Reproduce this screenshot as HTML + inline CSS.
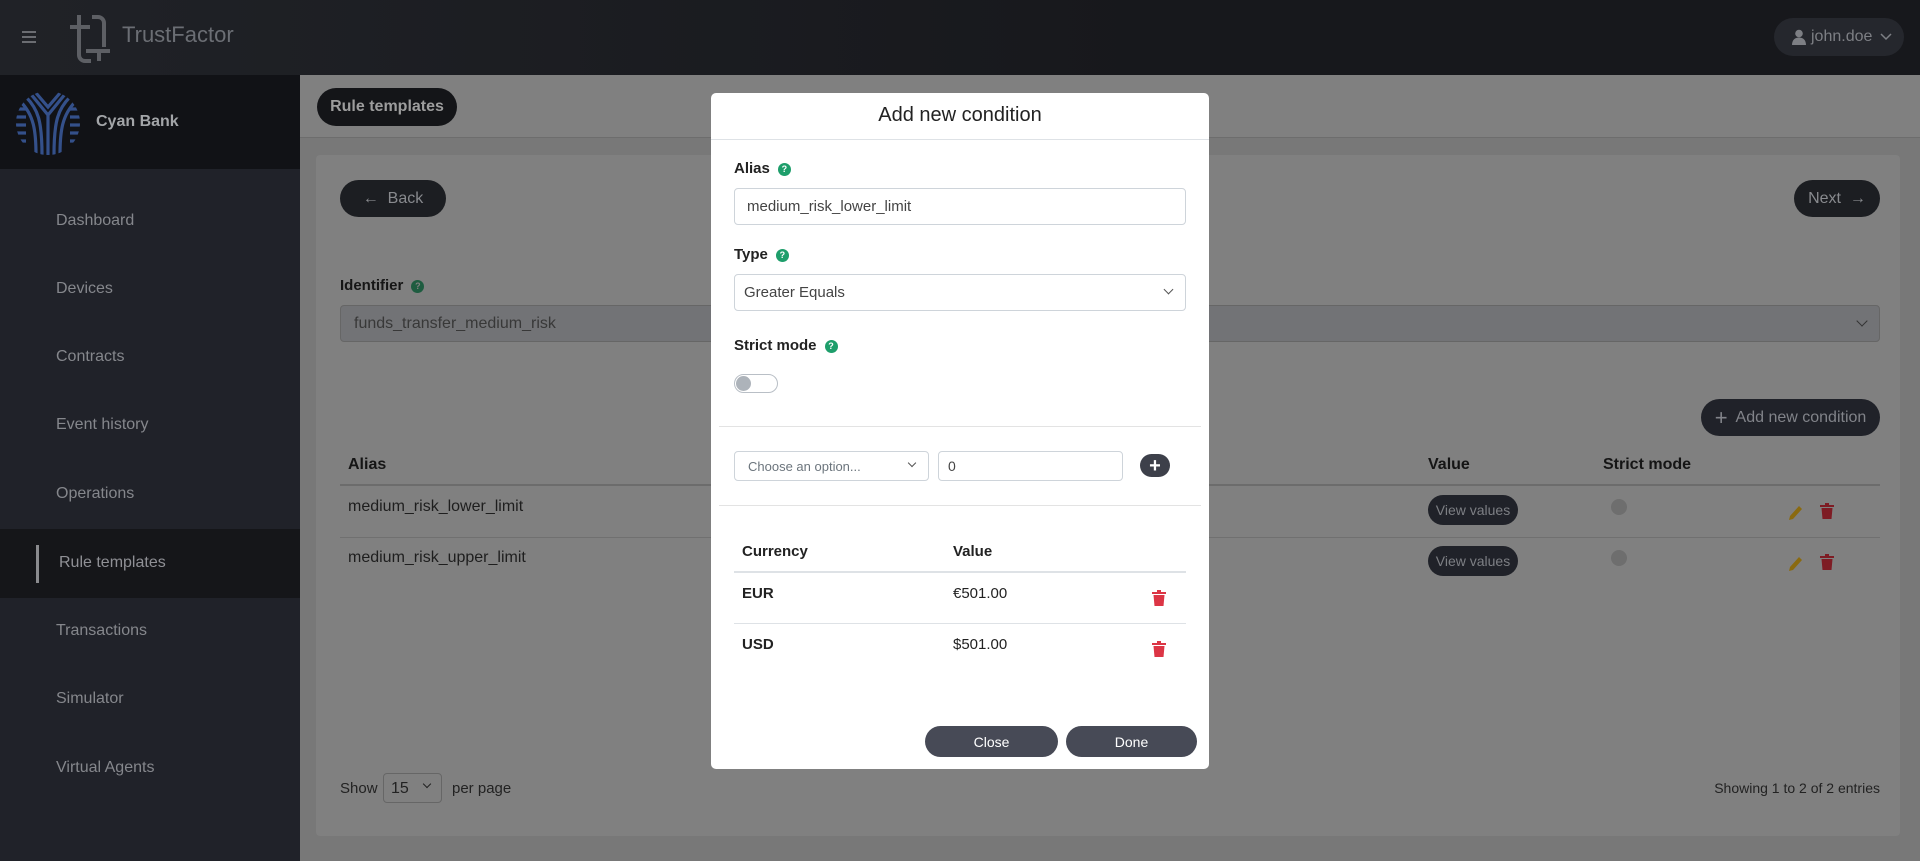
<!DOCTYPE html>
<html><head><meta charset="utf-8"><style>
*{box-sizing:border-box;margin:0;padding:0}
body{width:1920px;height:861px;overflow:hidden;position:relative;font-family:"Liberation Sans",sans-serif;background:#787878}
.a{position:absolute}
.nav{position:absolute;left:56px;font-size:16px;color:#85878c}
.pill{position:absolute;border-radius:20px;display:flex;align-items:center;justify-content:center}
.help{display:inline-block;width:13px;height:13px;border-radius:50%;background:#1e9e6b;color:#fff;font-size:9px;font-weight:bold;text-align:center;line-height:13px;vertical-align:middle;margin-left:8px}
.lbl{position:absolute;font-size:15px;font-weight:bold;color:#222}
.inp{position:absolute;border:1px solid #ced4da;border-radius:4px;background:#fff;font-size:15px;color:#444;display:flex;align-items:center}
.chev{position:absolute;width:8px;height:8px;border-right:1.5px solid #555;border-bottom:1.5px solid #555;transform:rotate(45deg)}
</style></head><body>
<!-- top bar -->
<div class="a" style="left:0;top:0;width:1920px;height:75px;background:linear-gradient(90deg,#202227,#17181c 60%,#17181c)"></div>
<div class="a" style="left:22px;top:31px;width:14px;height:2px;background:#6b6d72;box-shadow:0 5px 0 #6b6d72,0 10px 0 #6b6d72"></div>
<svg class="a" style="left:66px;top:13px" width="46" height="50" viewBox="0 0 46 50" fill="none" stroke="#5d5f64" stroke-width="4"><path d="M4 14h20M13 2v40a6 6 0 0 0 6 6h6"/><path d="M26 4h6a6 6 0 0 1 6 6v24M20 38h24M33 38v10"/></svg>
<div class="a" style="left:122px;top:22px;font-size:22px;color:#6b6e74">TrustFactor</div>
<div class="pill" style="left:1774px;top:18px;width:130px;height:38px;background:#25272d;color:#7d7f84;font-size:16px;justify-content:flex-start;padding-left:18px">
<svg width="14" height="16" viewBox="0 0 14 16" fill="#7d7f84"><circle cx="7" cy="4.5" r="3.8"/><path d="M0 16c0-5 3-7.5 7-7.5s7 2.5 7 7.5z"/></svg><span style="margin-left:5px">john.doe</span>
<svg style="margin-left:8px" width="12" height="8" viewBox="0 0 12 8" fill="none" stroke="#7d7f84" stroke-width="1.5"><path d="M1 1l5 5 5-5"/></svg></div>
<!-- sidebar -->
<div class="a" style="left:0;top:75px;width:300px;height:786px;background:#202229"></div>
<div class="a" style="left:0;top:75px;width:300px;height:94px;background:#111216"></div>
<svg class="a" style="left:16px;top:91px" width="64" height="64" viewBox="0 0 64 64" fill="none" stroke="#34508a" stroke-width="3.2">
<defs><clipPath id="c"><circle cx="32" cy="32" r="32"/></clipPath></defs>
<g clip-path="url(#c)">
<path d="M0 26h10M0 34h10M0 42h10M0 18h10M0 50h10M54 18h10M54 26h10M54 34h10M54 42h10M54 50h10"/>
<path d="M20 2l12 14 12-14M14 2l18 22 18-22M32 24v40"/>
<path d="M10 6c12 12 16 24 16 58M4 10c14 14 16 30 16 54M54 6c-12 12-16 24-16 58M60 10c-14 14-16 30-16 54"/>
</g></svg>
<div class="a" style="left:96px;top:113px;font-size:16px;font-weight:bold;color:#a3a5a8">Cyan Bank</div>
<div class="nav" style="top:212px">Dashboard</div>
<div class="nav" style="top:280px">Devices</div>
<div class="nav" style="top:348px">Contracts</div>
<div class="nav" style="top:416px">Event history</div>
<div class="nav" style="top:485px">Operations</div>
<div class="a" style="left:0;top:529px;width:300px;height:69px;background:#151619"></div>
<div class="a" style="left:36px;top:545px;width:3px;height:38px;background:#8a8b8e"></div>
<div class="nav" style="top:554px;left:59px;color:#8f9095">Rule templates</div>
<div class="nav" style="top:622px">Transactions</div>
<div class="nav" style="top:690px">Simulator</div>
<div class="nav" style="top:759px">Virtual Agents</div>
<!-- main header -->
<div class="a" style="left:300px;top:75px;width:1620px;height:63px;background:#808080;border-bottom:1px solid #6d6d6d"></div>
<div class="pill" style="left:317px;top:88px;width:140px;height:38px;background:#141518;color:#9d9d9d;font-size:16px;font-weight:bold">Rule templates</div>
<!-- card -->
<div class="a" style="left:316px;top:155px;width:1584px;height:681px;background:#808080;border-radius:4px"></div>
<div class="pill" style="left:340px;top:180px;width:106px;height:37px;background:#1c1e22;color:#888a8e;font-size:16px">&#8592;&nbsp; Back</div>
<div class="pill" style="left:1794px;top:180px;width:86px;height:37px;background:#1c1e22;color:#888a8e;font-size:16px">Next &nbsp;&#8594;</div>
<div class="a" style="left:340px;top:277px;font-size:15px;font-weight:bold;color:#161616">Identifier<span class="help" style="background:#1e5c40;color:#808080">?</span></div>
<div class="a" style="left:340px;top:305px;width:1540px;height:37px;background:#727376;border:1px solid #666;border-radius:4px;font-size:16px;color:#383838;padding:9px 0 0 13px">funds_transfer_medium_risk</div>
<div class="chev" style="left:1858px;top:317px;border-color:#333"></div>
<div class="pill" style="left:1701px;top:399px;width:179px;height:37px;background:#202229;color:#818389;font-size:16px"><span style="font-size:22px;margin-right:8px">+</span>Add new condition</div>
<div class="a" style="left:348px;top:456px;font-size:16px;font-weight:bold;color:#151515">Alias</div>
<div class="a" style="left:1428px;top:456px;font-size:16px;font-weight:bold;color:#151515">Value</div>
<div class="a" style="left:1603px;top:456px;font-size:16px;font-weight:bold;color:#151515">Strict mode</div>
<div class="a" style="left:340px;top:484px;width:1540px;height:2px;background:#6c6c6c"></div>
<div class="a" style="left:348px;top:498px;font-size:16px;color:#1e1e1e">medium_risk_lower_limit</div>
<div class="a" style="left:340px;top:537px;width:1540px;height:1px;background:#707070"></div>
<div class="a" style="left:348px;top:549px;font-size:16px;color:#1e1e1e">medium_risk_upper_limit</div>
<div class="pill" style="left:1428px;top:495px;width:90px;height:30px;background:#202229;color:#7d7f84;font-size:14px">View values</div>
<div class="pill" style="left:1428px;top:546px;width:90px;height:30px;background:#202229;color:#7d7f84;font-size:14px">View values</div>
<div class="a" style="left:1611px;top:499px;width:16px;height:16px;border-radius:50%;background:#6e6e6e"></div>
<div class="a" style="left:1611px;top:550px;width:16px;height:16px;border-radius:50%;background:#6e6e6e"></div>
<svg class="a" style="left:1787px;top:503px" width="16" height="18" viewBox="0 0 16 18"><path d="M3 13l9-10 3 3-9 10-4 1z" fill="#8a6a10"/></svg>
<svg class="a" style="left:1787px;top:554px" width="16" height="18" viewBox="0 0 16 18"><path d="M3 13l9-10 3 3-9 10-4 1z" fill="#8a6a10"/></svg>
<svg class="a" style="left:1820px;top:503px" width="14" height="16" viewBox="0 0 14 16" fill="#7e1c24"><path d="M0 2h14v2H0zM5 0h4v2H5zM1.5 5h11l-1 11h-9z"/></svg>
<svg class="a" style="left:1820px;top:554px" width="14" height="16" viewBox="0 0 14 16" fill="#7e1c24"><path d="M0 2h14v2H0zM5 0h4v2H5zM1.5 5h11l-1 11h-9z"/></svg>
<div class="a" style="left:340px;top:780px;font-size:15px;color:#222">Show</div>
<div class="a" style="left:383px;top:773px;width:59px;height:30px;border:1px solid #666;border-radius:4px;font-size:16px;color:#222;padding:6px 0 0 7px">15</div>
<div class="chev" style="left:424px;top:781px;width:6px;height:6px;border-color:#222"></div>
<div class="a" style="left:452px;top:780px;font-size:15px;color:#222">per page</div>
<div class="a" style="right:40px;top:780px;font-size:14px;color:#222">Showing 1 to 2 of 2 entries</div>
<!-- modal -->
<div class="a" style="left:711px;top:93px;width:498px;height:676px;background:#fff;border-radius:5px"></div>
<div class="a" style="left:711px;top:104px;width:498px;text-align:center;font-size:20px;color:#222">Add new condition</div>
<div class="a" style="left:711px;top:139px;width:498px;height:1px;background:#dee2e6"></div>
<div class="lbl" style="left:734px;top:160px">Alias<span class="help">?</span></div>
<div class="inp" style="left:734px;top:188px;width:452px;height:37px;padding-left:12px">medium_risk_lower_limit</div>
<div class="lbl" style="left:734px;top:246px">Type<span class="help">?</span></div>
<div class="inp" style="left:734px;top:274px;width:452px;height:37px;padding-left:9px">Greater Equals</div>
<div class="chev" style="left:1165px;top:286px;width:7px;height:7px"></div>
<div class="lbl" style="left:734px;top:337px">Strict mode<span class="help">?</span></div>
<div class="a" style="left:734px;top:374px;width:44px;height:19px;border:1px solid #b9bfc6;border-radius:10px"></div>
<div class="a" style="left:736px;top:376px;width:15px;height:15px;border-radius:50%;background:#adb3ba"></div>
<div class="a" style="left:719px;top:426px;width:482px;height:1px;background:#e3e3e3"></div>
<div class="inp" style="left:734px;top:451px;width:195px;height:30px;padding-left:13px;font-size:13px;color:#6c757d">Choose an option...</div>
<div class="chev" style="left:909px;top:460px;width:6px;height:6px"></div>
<div class="inp" style="left:938px;top:451px;width:185px;height:30px;padding-left:9px;font-size:14px">0</div>
<div class="pill" style="left:1140px;top:454px;width:30px;height:23px;background:#3d404a;color:#fff;font-size:20px;font-weight:bold;line-height:1">+</div>
<div class="a" style="left:719px;top:505px;width:482px;height:1px;background:#e3e3e3"></div>
<div class="a" style="left:742px;top:543px;font-size:15px;font-weight:bold;color:#222">Currency</div>
<div class="a" style="left:953px;top:543px;font-size:15px;font-weight:bold;color:#222">Value</div>
<div class="a" style="left:734px;top:571px;width:452px;height:2px;background:#dee2e6"></div>
<div class="a" style="left:742px;top:585px;font-size:15px;font-weight:bold;color:#222">EUR</div>
<div class="a" style="left:953px;top:585px;font-size:15px;color:#222">€501.00</div>
<div class="a" style="left:734px;top:623px;width:452px;height:1px;background:#dee2e6"></div>
<div class="a" style="left:742px;top:636px;font-size:15px;font-weight:bold;color:#222">USD</div>
<div class="a" style="left:953px;top:636px;font-size:15px;color:#222">$501.00</div>
<svg class="a" style="left:1152px;top:590px" width="14" height="16" viewBox="0 0 14 16" fill="#dc3545"><path d="M0 2h14v2H0zM5 0h4v2H5zM1.5 5h11l-1 11h-9z"/></svg>
<svg class="a" style="left:1152px;top:641px" width="14" height="16" viewBox="0 0 14 16" fill="#dc3545"><path d="M0 2h14v2H0zM5 0h4v2H5zM1.5 5h11l-1 11h-9z"/></svg>
<div class="pill" style="left:925px;top:726px;width:133px;height:31px;background:#474a56;color:#fff;font-size:14px">Close</div>
<div class="pill" style="left:1066px;top:726px;width:131px;height:31px;background:#474a56;color:#fff;font-size:14px">Done</div>
</body></html>
